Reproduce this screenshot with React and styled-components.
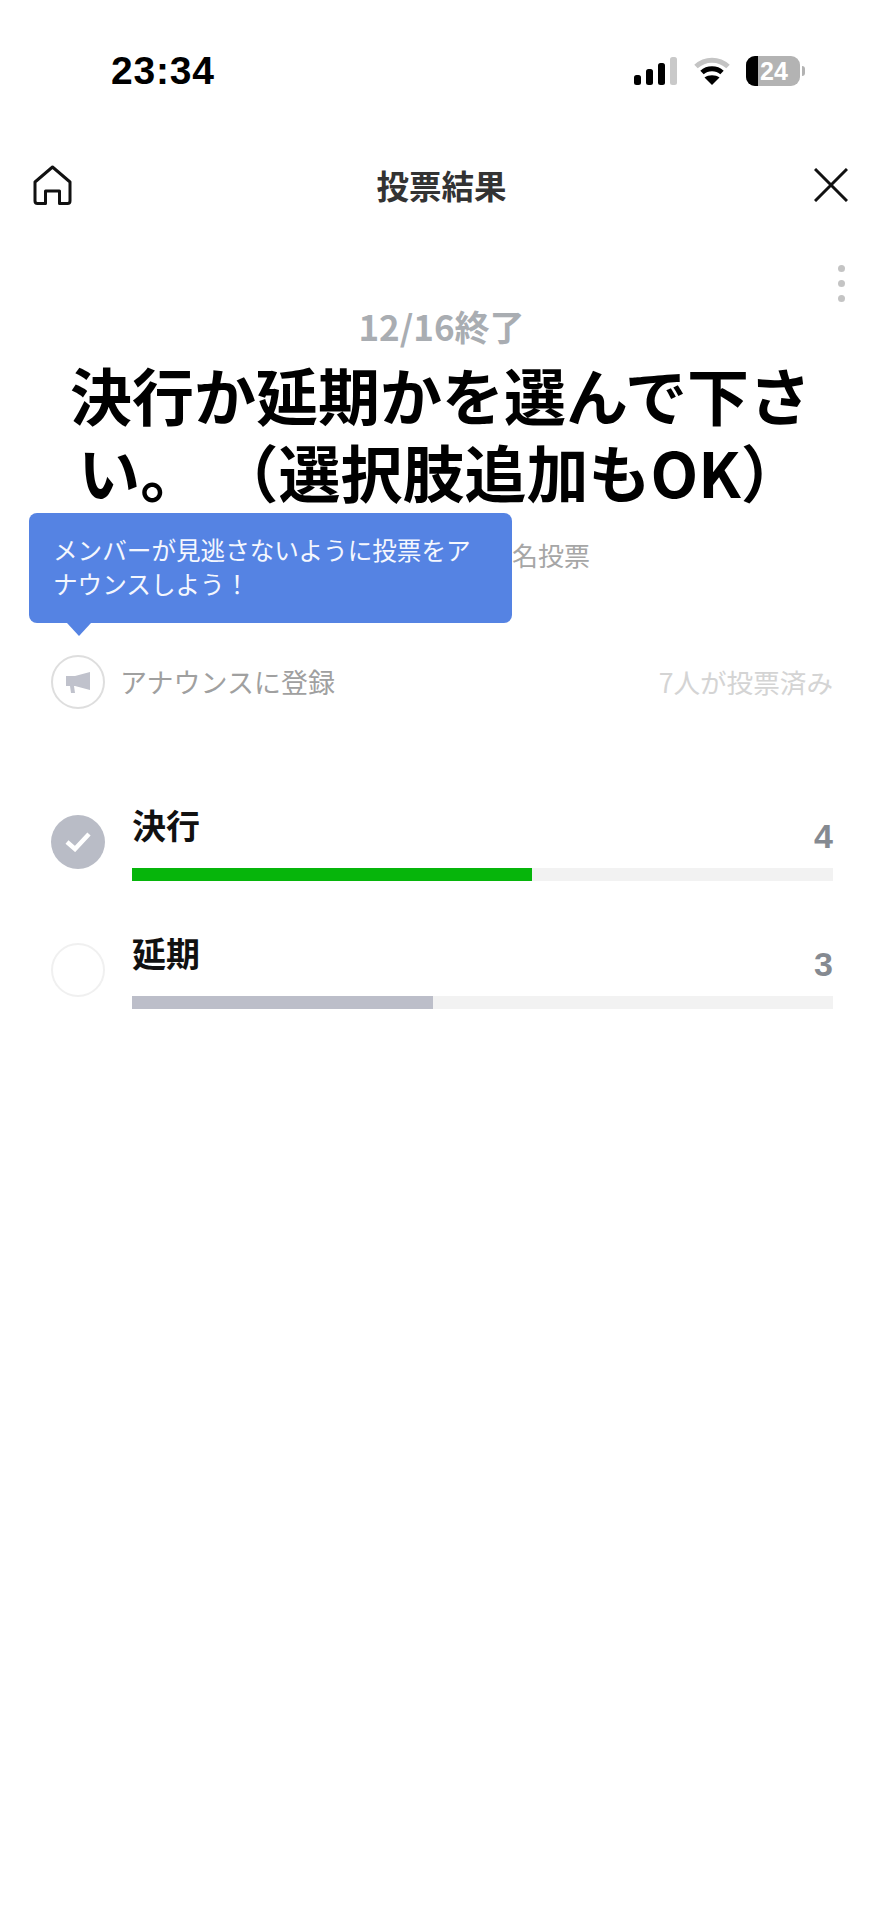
import React from "react";
import styled, { createGlobalStyle } from "styled-components";

const FONT = `"Noto Sans CJK JP", "Noto Sans", sans-serif`;

const GlobalStyle = createGlobalStyle`
  html, body {
    margin: 0;
    padding: 0;
    background: #fff;
  }
  * {
    box-sizing: border-box;
  }
`;

const Page = styled.div`
  width: 883px;
  min-height: 1920px;
  background: #fff;
  font-family: ${FONT};
  overflow: hidden;
`;

const StatusBar = styled.div`
  height: 142px;
  padding: 0 86px 0 111px;
  display: flex;
  align-items: center;
  justify-content: space-between;
`;

const Clock = styled.div`
  font-family: "Liberation Sans", sans-serif;
  font-size: 39px;
  font-weight: 700;
  line-height: 44px;
  letter-spacing: 0.8px;
  color: #000;
`;

const StatusIcons = styled.div`
  display: flex;
  align-items: center;
  gap: 17px;
`;

const Battery = styled.div`
  position: relative;
  width: 54px;
  height: 30px;
  border-radius: 9px;
  overflow: hidden;
  background: #b3b3b3;
  color: #fff;
  font-family: "Liberation Sans", sans-serif;
  font-size: 25px;
  font-weight: 700;
  line-height: 30px;
  text-align: center;
  padding-left: 2px;
`;

const BatteryFill = styled.div`
  position: absolute;
  left: 0;
  top: 0;
  bottom: 0;
  width: 12px;
  background: #000;
`;

const BatteryLevel = styled.span`
  position: relative;
`;

const BatteryWrap = styled.div`
  display: flex;
  align-items: center;
  gap: 2px;
  margin-left: -1px;
  margin-right: -8px;
`;

const BatteryNub = styled.div`
  width: 3px;
  height: 10px;
  border-radius: 0 3px 3px 0;
  background: #b3b3b3;
`;

const NavBar = styled.div`
  height: 86px;
  padding: 0 33px;
  display: grid;
  grid-template-columns: 1fr auto 1fr;
  align-items: center;
`;

const NavEnd = styled.div`
  display: flex;
  justify-content: ${(p) => (p.$right ? "flex-end" : "flex-start")};
  padding-right: ${(p) => (p.$right ? "2px" : "0")};
`;

const NavTitle = styled.h1`
  margin: 0;
  font-size: 32.5px;
  font-weight: 700;
  line-height: 42px;
  color: #333;
`;

const MoreRow = styled.div`
  padding: 37px 38px 0 0;
  display: flex;
  justify-content: flex-end;
`;

const MoreDots = styled.div`
  display: flex;
  flex-direction: column;
  gap: 8px;
`;

const Dot = styled.span`
  width: 7px;
  height: 7px;
  border-radius: 50%;
  background: #c4c4c4;
`;

const DateLine = styled.div`
  margin-top: 4px;
  font-size: 35px;
  font-weight: 700;
  line-height: 40px;
  text-align: center;
  color: #a9adb2;
`;

const Question = styled.h2`
  margin: 10px 0 0;
  padding: 0 66px 0 64px;
  font-size: 62px;
  font-weight: 700;
  line-height: 77px;
  text-align: center;
  color: #000;
`;

const QuestionTail = styled.span`
  white-space: nowrap;
`;

const MetaBlock = styled.div`
  position: relative;
  margin-top: 28px;
  padding-right: 293px;
  display: flex;
  justify-content: flex-end;
  font-size: 26px;
  line-height: 34px;
  color: #a6a6a6;
`;

const Tooltip = styled.div`
  position: absolute;
  left: 29px;
  top: -25px;
  width: 483px;
  height: 110px;
  padding: 20px 24px 0 24px;
  border-radius: 8px;
  background: #5583e3;
  color: #f4f7fe;
  font-size: 24.6px;
  line-height: 33.5px;

  &::after {
    content: "";
    position: absolute;
    left: 38px;
    bottom: -13px;
    border-left: 12px solid transparent;
    border-right: 12px solid transparent;
    border-top: 13px solid #5583e3;
  }
`;

const AnnounceRow = styled.div`
  margin-top: 83px;
  padding: 0 50px 0 51px;
  display: flex;
  align-items: center;
  justify-content: space-between;
`;

const AnnounceLeft = styled.div`
  display: flex;
  align-items: center;
  gap: 15px;
  font-size: 27px;
  line-height: 40px;
  color: #a0a0a0;
`;

const VoteCount = styled.div`
  font-size: 26.6px;
  line-height: 40px;
  color: #d4d4d4;
`;

const Circle = styled.div`
  flex: none;
  width: 54px;
  height: 54px;
  margin-top: ${(p) => (p.$raised ? "-2px" : "0")};
  border-radius: 50%;
  display: flex;
  align-items: center;
  justify-content: center;
  border: ${(p) => (p.$filled ? "none" : `2px solid ${p.$line}`)};
  background: ${(p) => (p.$filled ? "#b9bcc6" : "#fff")};
`;

const Options = styled.div`
  margin-top: 96px;
  padding: 0 50px 0 51px;
  display: flex;
  flex-direction: column;
  gap: 52px;
`;

const Option = styled.div`
  display: flex;
  align-items: center;
  gap: 27px;
`;

const OptionBody = styled.div`
  flex: 1;
`;

const OptionHead = styled.div`
  height: 63px;
  display: flex;
  align-items: flex-start;
  justify-content: space-between;
`;

const OptionLabel = styled.div`
  font-size: 34px;
  font-weight: 700;
  line-height: 40px;
  color: #111;
`;

const OptionCount = styled.div`
  padding-top: 15px;
  font-family: "Liberation Sans", sans-serif;
  font-size: 34px;
  font-weight: 700;
  line-height: 32px;
  color: #858a91;
`;

const Track = styled.div`
  height: 13px;
  background: #f2f2f2;
`;

const Fill = styled.div`
  height: 100%;
  background: ${(p) => p.$color};
`;

const options = [
  { label: "決行", count: 4, width: "57%", color: "#06b50b", voted: true },
  { label: "延期", count: 3, width: "43%", color: "#bcbec9", voted: false },
];

function StatusSignal() {
  return (
    <svg width="43" height="28" viewBox="0 0 43 28" fill="#000">
      <rect x="0" y="18" width="7" height="10" rx="2.5" />
      <rect x="12" y="12" width="7" height="16" rx="2.5" />
      <rect x="24" y="6" width="7" height="22" rx="2.5" />
      <rect x="36" y="0" width="7" height="28" rx="2.5" fill="#c9c9c9" />
    </svg>
  );
}

function StatusWifi() {
  return (
    <svg width="36" height="28" viewBox="0 0 36 28" fill="none" strokeWidth="5">
      <path d="M2 9.5C11 1 25 1 34 9.5" stroke="#c4c4c4" />
      <path d="M8 15.5C13.5 10.5 22.5 10.5 28 15.5" stroke="#000" />
      <path d="M18 28L10.5 20.5C14.5 17.5 21.5 17.5 25.5 20.5Z" fill="#000" />
    </svg>
  );
}

function HomeIcon() {
  return (
    <svg width="39" height="40" viewBox="0 0 39 40" fill="none" stroke="#111" strokeWidth="3" strokeLinejoin="round">
      <path d="M2 17L19.5 2L37 17V36C37 37.5 36 38.5 34.5 38.5H26.5V26H12.5V38.5H4.5C3 38.5 2 37.5 2 36Z" />
    </svg>
  );
}

function CloseIcon() {
  return (
    <svg width="34" height="34" viewBox="0 0 34 34" fill="none" stroke="#111" strokeWidth="3">
      <path d="M1 1L33 33M33 1L1 33" />
    </svg>
  );
}

function MegaphoneIcon() {
  return (
    <svg width="24" height="21" viewBox="0 0 24 21" fill="#c0c2cc">
      <path d="M0 4H9L24 0V18L9 14H8L9 21H5L4 14H0Z" />
    </svg>
  );
}

function CheckIcon() {
  return (
    <svg width="26" height="20" viewBox="0 0 26 20" fill="none" stroke="#fff" strokeWidth="4.5">
      <path d="M2 10L10 17L24 2" />
    </svg>
  );
}

export default function App() {
  return (
    <Page>
      <GlobalStyle />
      <StatusBar>
        <Clock>23:34</Clock>
        <StatusIcons>
          <StatusSignal />
          <StatusWifi />
          <BatteryWrap>
            <Battery>
              <BatteryFill />
              <BatteryLevel>24</BatteryLevel>
            </Battery>
            <BatteryNub />
          </BatteryWrap>
        </StatusIcons>
      </StatusBar>
      <NavBar>
        <NavEnd>
          <HomeIcon />
        </NavEnd>
        <NavTitle>投票結果</NavTitle>
        <NavEnd $right>
          <CloseIcon />
        </NavEnd>
      </NavBar>
      <MoreRow>
        <MoreDots>
          <Dot />
          <Dot />
          <Dot />
        </MoreDots>
      </MoreRow>
      <DateLine>12/16終了</DateLine>
      <Question>
        決行か延期かを選んで下さ
        <QuestionTail>い。 （選択肢追加もOK）</QuestionTail>
      </Question>
      <MetaBlock>
        名投票
        <Tooltip>メンバーが見逃さないように投票をアナウンスしよう！</Tooltip>
      </MetaBlock>
      <AnnounceRow>
        <AnnounceLeft>
          <Circle $line="#dedede">
            <MegaphoneIcon />
          </Circle>
          アナウンスに登録
        </AnnounceLeft>
        <VoteCount>7人が投票済み</VoteCount>
      </AnnounceRow>
      <Options>
        {options.map((o) => (
          <Option key={o.label}>
            <Circle $raised $filled={o.voted} $line="#f0f0f0">
              {o.voted && <CheckIcon />}
            </Circle>
            <OptionBody>
              <OptionHead>
                <OptionLabel>{o.label}</OptionLabel>
                <OptionCount>{o.count}</OptionCount>
              </OptionHead>
              <Track>
                <Fill $color={o.color} style={{ width: o.width }} />
              </Track>
            </OptionBody>
          </Option>
        ))}
      </Options>
    </Page>
  );
}
